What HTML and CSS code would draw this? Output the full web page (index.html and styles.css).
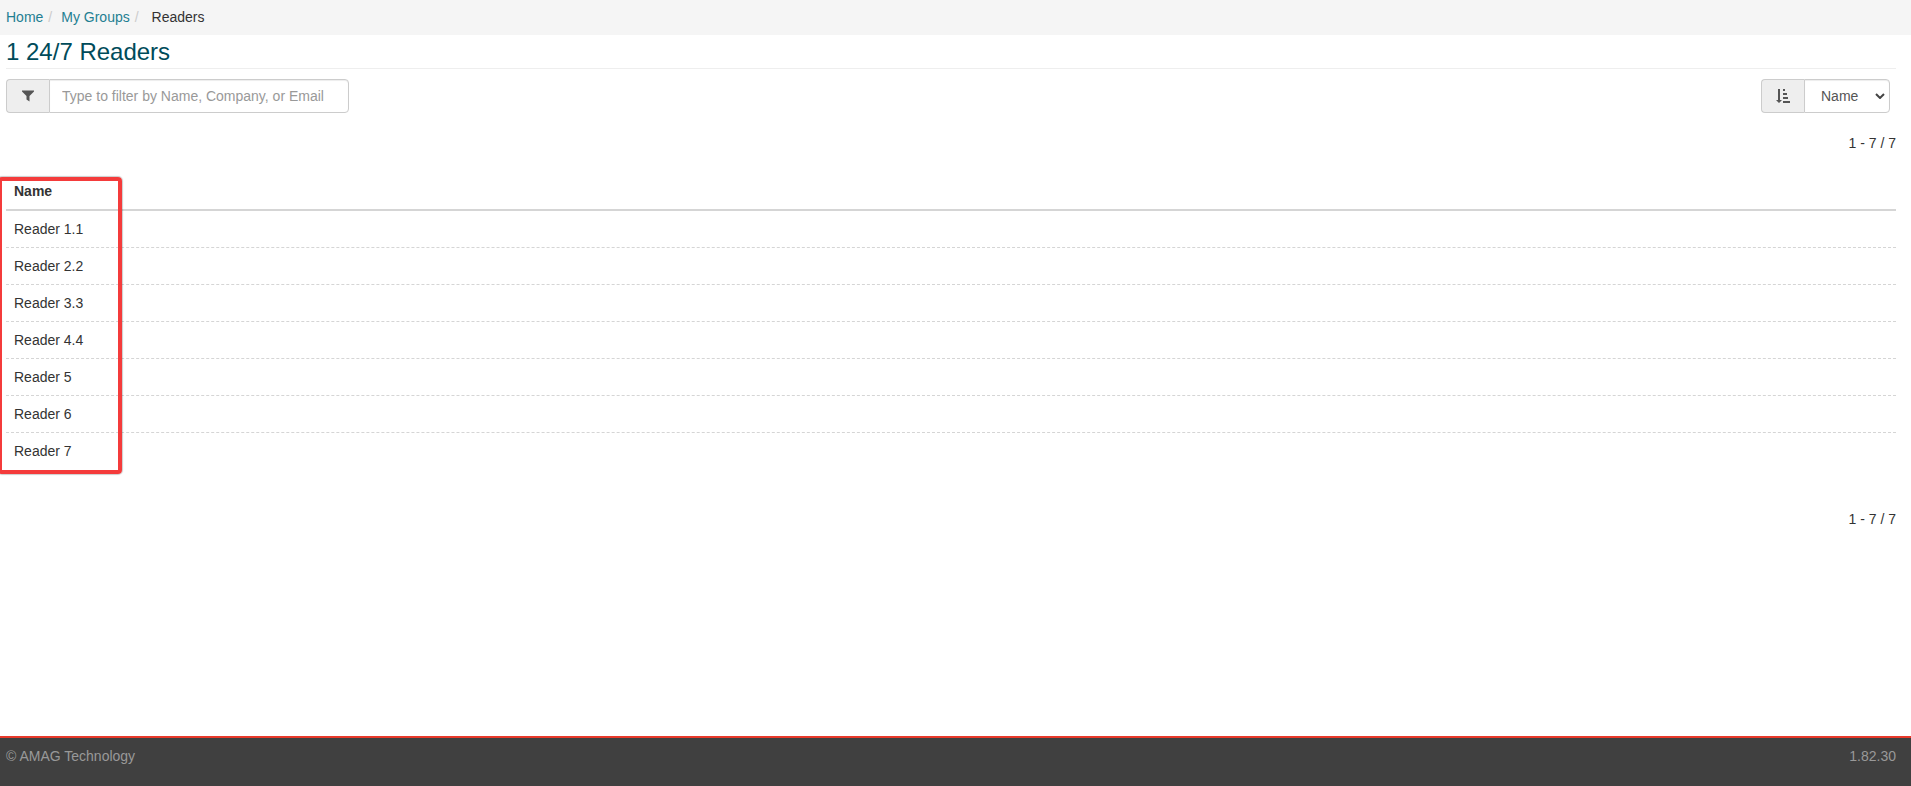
FILE: index.html
```
<!DOCTYPE html>
<html lang="en">
<head>
    <meta charset="UTF-8">
    <title>1 24/7 Readers</title>
    <link rel="stylesheet" href="styles.css">
</head>
<body>
    <nav aria-label="Breadcrumb">
        <ol class="breadcrumb">
            <li><a href="#">Home</a></li>
            <li><a href="#">My Groups</a></li>
            <li class="active">Readers</li>
        </ol>
    </nav>

    <main class="content">
        <h1 class="page-header">1 24/7 Readers</h1>

        <div class="toolbar">
            <div class="input-group filter">
                <label class="addon" for="filterText" aria-label="Filter">
                    <svg width="12" height="12" viewBox="0 0 12 12" fill="#555"><path d="M0 0.500h12v1L7.500 6v5.500L4.500 9.500V6L0 1.500z"/></svg>
                </label>
                <input type="text" class="form-control" id="filterText" placeholder="Type to filter by Name, Company, or Email">
            </div>
            <div class="input-group sort">
                <label class="addon" for="sortBy" aria-label="Sort by">
                    <svg width="14" height="14" viewBox="0 0 14 14" fill="#555"><path d="M2 0h2v11h2L3 14 0 11h2zM7 0h2v2H7zM7 4h4v2H7zM7 8h5v2H7zM7 12h7v2H7z"/></svg>
                </label>
                <select class="form-control" id="sortBy">
                    <option>Name</option>
                </select>
                <svg class="caret" width="10" height="6" viewBox="0 0 10 6" fill="none" stroke="#444" stroke-width="2"><path d="M1 1l4 4 4-4"/></svg>
            </div>
        </div>

        <div class="pager">1 - 7 / 7</div>

        <div class="table-wrap">
            <table class="table">
                <thead>
                    <tr><th>Name</th></tr>
                </thead>
                <tbody>
                    <tr><td>Reader 1.1</td></tr>
                    <tr><td>Reader 2.2</td></tr>
                    <tr><td>Reader 3.3</td></tr>
                    <tr><td>Reader 4.4</td></tr>
                    <tr><td>Reader 5</td></tr>
                    <tr><td>Reader 6</td></tr>
                    <tr><td>Reader 7</td></tr>
                </tbody>
            </table>
            <div class="highlight"></div>
        </div>

        <div class="pager">1 - 7 / 7</div>
    </main>

    <footer class="footer">
        <span>© AMAG Technology</span>
        <span>1.82.30</span>
    </footer>
</body>
</html>
```
FILE: styles.css
```
* {
    box-sizing: border-box;
}

body {
    margin: 0;
    min-height: 100vh;
    display: flex;
    flex-direction: column;
    font-family: "Liberation Sans", Arial, sans-serif;
    font-size: 14px;
    line-height: 20px;
    color: #333;
    background: #fff;
}

a {
    color: #1f7f92;
    text-decoration: none;
}

.breadcrumb {
    display: flex;
    margin: 0;
    padding: 7px 6px 8px;
    list-style: none;
    background: #f5f5f5;
}

.breadcrumb li + li::before {
    content: "/";
    padding: 0 9px 0 5px;
    color: #ccc;
}

.breadcrumb .active::before {
    padding-right: 13px;
}

.content {
    flex: 1;
    padding: 0 15px 0 6px;
}

.page-header {
    margin: 0 0 10px;
    padding: 3px 0 2px;
    border-bottom: 1px solid #eee;
    font-size: 24px;
    font-weight: 400;
    line-height: 28px;
    color: #004b5a;
}

.toolbar {
    display: flex;
    justify-content: space-between;
    margin-bottom: 20px;
    padding-right: 6px;
}

.input-group {
    position: relative;
    display: flex;
    height: 34px;
}

.filter {
    width: 343px;
}

.sort {
    width: 129px;
}

.addon {
    display: flex;
    align-items: center;
    justify-content: center;
    width: 43px;
    border: 1px solid #ccc;
    border-right: 0;
    border-radius: 4px 0 0 4px;
    background: #eee;
}

.form-control {
    flex: 1;
    min-width: 0;
    padding: 6px 12px;
    border: 1px solid #ccc;
    border-radius: 0 4px 4px 0;
    font: inherit;
    color: #555;
    background: #fff;
    box-shadow: inset 0 1px 1px rgba(0, 0, 0, 0.075);
}

.form-control::placeholder {
    color: #999;
    opacity: 1;
}

select.form-control {
    appearance: none;
    padding: 0 16px;
}

.caret {
    position: absolute;
    top: 14px;
    right: 5px;
    pointer-events: none;
}

.pager {
    text-align: right;
}

.table-wrap {
    position: relative;
    margin: 20px 0 39px;
}

.table {
    width: 100%;
    border-spacing: 0;
}

.table th,
.table td {
    padding: 8px;
    text-align: left;
}

.table th {
    border-bottom: 2px solid #d5d5d5;
}

.table td {
    border-bottom: 1px dashed #d5d5d5;
}

.table tbody tr:last-child td {
    border-bottom-color: transparent;
}

/* red frame round the name column */
.highlight {
    position: absolute;
    top: 4px;
    bottom: -4px;
    left: -8px;
    width: 124px;
    border: 4px solid #f43b3b;
    border-radius: 4px;
    box-shadow: 0 0 1px 1px rgba(0, 0, 0, 0.2);
    pointer-events: none;
}

.footer {
    display: flex;
    justify-content: space-between;
    height: 50px;
    padding: 8px 15px 0 6px;
    border-top: 2px solid #e8392b;
    color: #999;
    background: #404040;
}
```
